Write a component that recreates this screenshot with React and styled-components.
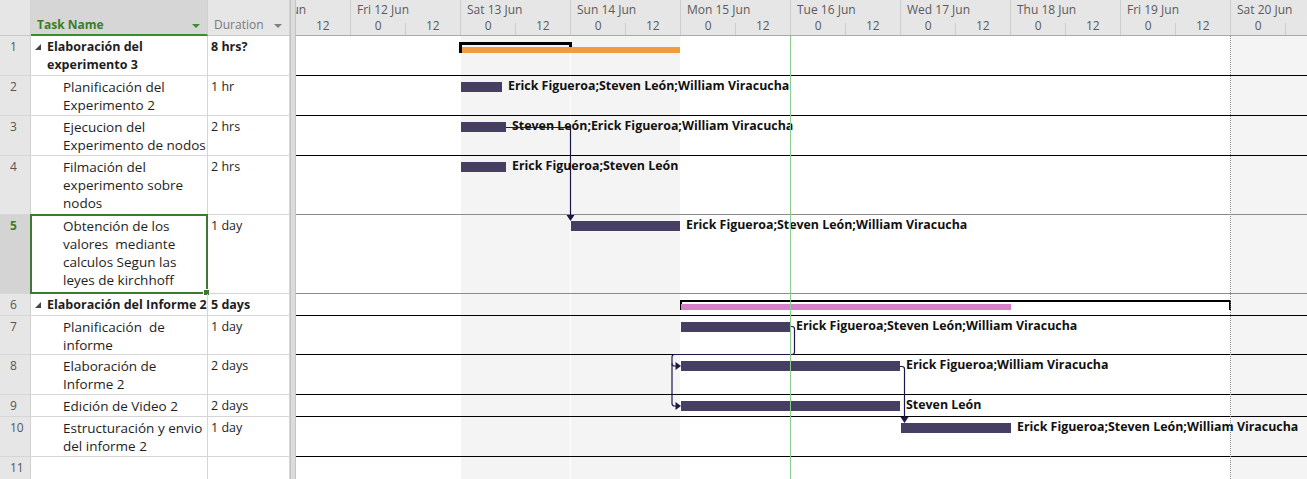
import React from "react";
import styled, { createGlobalStyle } from "styled-components";

// chart pane starts at page x 296, first visible day (Thu 11 Jun) begins at 240
const CHART_LEFT = 296;
const BODY_TOP = 36;
const DAY_W = 110;
const FIRST_DAY = 240;

const at = (x) => x - CHART_LEFT;

const DAYS = [
  "Thu 11 Jun",
  "Fri 12 Jun",
  "Sat 13 Jun",
  "Sun 14 Jun",
  "Mon 15 Jun",
  "Tue 16 Jun",
  "Wed 17 Jun",
  "Thu 18 Jun",
  "Fri 19 Jun",
  "Sat 20 Jun",
  "Sun 21 Jun",
];

const ALL = "Erick Figueroa;Steven León;William Viracucha";

const TASKS = [
  { id: 1, h: 40, lines: ["Elaboración del", "experimento 3"], dur: "8 hrs?", summary: true,
    bracket: [459, 572], sbar: [462, 680], color: "#f09b3d" },
  { id: 2, h: 40, lines: ["Planificación del", "Experimento 2"], dur: "1 hr", bar: [461, 502], label: ALL },
  { id: 3, h: 40, lines: ["Ejecucion del", "Experimento de nodos"], dur: "2 hrs", bar: [461, 506],
    label: "Steven León;Erick Figueroa;William Viracucha" },
  { id: 4, h: 59, lines: ["Filmación del", "experimento sobre", "nodos"], dur: "2 hrs", bar: [461, 506],
    label: "Erick Figueroa;Steven León", line: "#8c8c8c" },
  { id: 5, h: 79, lines: ["Obtención de los", "valores  mediante", "calculos Segun las", "leyes de kirchhoff"],
    dur: "1 day", bar: [571, 680], label: ALL, selected: true, line: "#8c8c8c" },
  { id: 6, h: 22, lines: ["Elaboración del Informe 2"], dur: "5 days", summary: true,
    bracket: [680, 1231], sbar: [681, 1011], color: "#d77fc8", thin: true },
  { id: 7, h: 39, lines: ["Planificación  de", "informe"], dur: "1 day", bar: [681, 790], label: ALL },
  { id: 8, h: 40, lines: ["Elaboración de", "Informe 2"], dur: "2 days", bar: [681, 900],
    label: "Erick Figueroa;William Viracucha" },
  { id: 9, h: 22, lines: ["Edición de Video 2"], dur: "2 days", bar: [681, 900], label: "Steven León" },
  { id: 10, h: 40, lines: ["Estructuración y envio", "del informe 2"], dur: "1 day", bar: [901, 1011], label: ALL },
  { id: 11, h: 40, lines: [], dur: "" },
];

const GlobalStyle = createGlobalStyle`
  html, body {
    margin: 0;
    padding: 0;
    background: #fff;
  }
  body {
    font-family: "Open Sans", "Noto Sans", sans-serif;
    font-size: 12.5px;
    color: #1e1e1e;
    overflow: hidden;
  }
`;

const Page = styled.div`
  display: flex;
  width: 1307px;
  height: 479px;
  overflow: hidden;
`;

/* ---------- task table ---------- */

const TablePane = styled.div`
  width: 290px;
  flex: none;
  display: flex;
  flex-direction: column;
`;

const TableHeader = styled.div`
  display: grid;
  grid-template-columns: 31px 177px 82px;
  height: 36px;
  flex: none;
`;

const Corner = styled.div`
  background: #e6e6e6;
  border-right: 1px solid #d0d0d0;
  border-bottom: 1px solid #c8c8c8;
`;

const ColHead = styled.div`
  position: relative;
  display: flex;
  align-items: flex-end;
  padding: 0 0 ${(p) => (p.$active ? 1 : 2)}px 6px;
  background: ${(p) => (p.$active ? "#d6d6d6" : "#e6e6e6")};
  border-right: 1px solid #d0d0d0;
  border-bottom: ${(p) => (p.$active ? "2px solid #3e8a35" : "1px solid #c8c8c8")};
  color: ${(p) => (p.$active ? "#3a7d2c" : "#7a7a7a")};
  font-weight: ${(p) => (p.$active ? 700 : 400)};
  font-size: 12px;
  line-height: 16px;
  &::after {
    content: "";
    position: absolute;
    right: 7px;
    bottom: ${(p) => (p.$active ? 6 : 7)}px;
    border-left: 4px solid transparent;
    border-right: 4px solid transparent;
    border-top: 4px solid ${(p) => (p.$active ? "#3e8a35" : "#808080")};
  }
`;

const TableRow = styled.div`
  display: grid;
  grid-template-columns: 31px 177px 82px;
  height: ${(p) => p.$h}px;
  flex: none;
`;

const NumCell = styled.div`
  background: ${(p) => (p.$selected ? "#d4d4d4" : "#e6e6e6")};
  color: ${(p) => (p.$selected ? "#3a7d2c" : "#555")};
  font-weight: ${(p) => (p.$selected ? 700 : 400)};
  font-size: 12px;
  border-right: 1px solid #d0d0d0;
  border-bottom: 1px solid #d6d6d6;
  padding: 2px 0 0 10px;
  line-height: 18px;
`;

const NameCell = styled.div`
  position: relative;
  display: flex;
  align-items: flex-start;
  padding: 2px 0 0 ${(p) => (p.$summary ? 4 : 32)}px;
  border-right: 1px solid #d6d6d6;
  border-bottom: 1px solid #d6d6d6;
  font-weight: ${(p) => (p.$summary ? 700 : 400)};
  font-size: ${(p) => (p.$summary ? 12.5 : 13.5)}px;
  line-height: 18px;
  white-space: pre;
  ${(p) =>
    p.$selected &&
    `
    &::before {
      content: "";
      position: absolute;
      left: -1px; top: -1px; right: -1px; bottom: -1px;
      border: 2px solid #3c7a30;
      pointer-events: none;
    }
    &::after {
      content: "";
      position: absolute;
      right: -3px; bottom: -3px;
      width: 5px; height: 5px;
      background: #3c7a30;
      border: 1px solid #fff;
    }
  `}
`;

const Collapse = styled.svg`
  flex: none;
  width: 6px;
  height: 6px;
  margin: 6px 6px 0 0;
`;

const DurCell = styled.div`
  padding: 2px 0 0 3px;
  border-right: 1px solid #d6d6d6;
  border-bottom: 1px solid #d6d6d6;
  font-weight: ${(p) => (p.$summary ? 700 : 400)};
  line-height: 18px;
`;

const Splitter = styled.div`
  width: 6px;
  flex: none;
  background: #dcdcdc;
  border-left: 1px solid #c4c4c4;
  border-right: 1px solid #c4c4c4;
  box-sizing: border-box;
`;

/* ---------- gantt chart ---------- */

const ChartPane = styled.div`
  flex: 1;
  position: relative;
  overflow: hidden;
  display: flex;
  flex-direction: column;
`;

const TimeHeader = styled.div`
  display: flex;
  height: 36px;
  flex: none;
  margin-left: ${FIRST_DAY - CHART_LEFT}px;
  background: #e6e6e6;
  border-bottom: 1px solid #a9a9a9;
  box-sizing: border-box;
  color: #5a5a5a;
  font-size: 12px;
`;

const DayCol = styled.div`
  width: ${DAY_W}px;
  flex: none;
  border-left: 1px solid #cdcdcd;
  box-sizing: border-box;
  display: flex;
  flex-direction: column;
`;

const DayLabel = styled.div`
  height: 18px;
  padding: 1px 0 0 6px;
  box-sizing: border-box;
  line-height: 17px;
  white-space: nowrap;
`;

const HalfRow = styled.div`
  display: flex;
  flex: 1;
`;

const Half = styled.div`
  position: relative;
  flex: 1;
  text-align: center;
  line-height: 16px;
  ${(p) =>
    p.$tick &&
    `
    &::before {
      content: "";
      position: absolute;
      left: -1px; top: 5px; bottom: 0;
      border-left: 1px solid #cdcdcd;
    }
  `}
`;

const ChartBody = styled.div`
  position: relative;
  flex: 1;
`;

const Shade = styled.div`
  position: absolute;
  top: 0;
  bottom: 0;
  left: ${(p) => p.$left}px;
  width: ${(p) => p.$width}px;
  background: #f4f4f4;
`;

const ChartRow = styled.div`
  position: relative;
  height: ${(p) => p.$h}px;
  border-bottom: 1px solid ${(p) => p.$line || "#000"};
  box-sizing: border-box;
`;

const Bar = styled.div`
  position: absolute;
  top: 6px;
  height: 10px;
  left: ${(p) => p.$left}px;
  width: ${(p) => p.$width}px;
  background: #463f63;
`;

const BarLabel = styled.div`
  position: absolute;
  top: 1px;
  left: ${(p) => p.$left}px;
  font-weight: 700;
  font-size: 12.4px;
  line-height: 18px;
  color: #111;
  white-space: nowrap;
`;

const Bracket = styled.div`
  position: absolute;
  top: 6px;
  height: ${(p) => (p.$thin ? 10 : 11)}px;
  left: ${(p) => p.$left}px;
  width: ${(p) => p.$width}px;
  box-sizing: border-box;
  border: ${(p) => (p.$thin ? 2 : 3)}px solid #000;
  border-bottom: none;
`;

const SummaryBar = styled.div`
  position: absolute;
  top: ${(p) => (p.$thin ? 10 : 11)}px;
  height: 6px;
  left: ${(p) => p.$left}px;
  width: ${(p) => p.$width}px;
  background: ${(p) => p.$color};
`;

const TodayLine = styled.div`
  position: absolute;
  top: 0;
  bottom: 0;
  left: ${at(790)}px;
  width: 1px;
  background: #8ccc8c;
  z-index: 3;
`;

const FinishLine = styled.div`
  position: absolute;
  top: 0;
  bottom: 0;
  left: ${at(1230)}px;
  border-left: 1px dotted #8a8a8a;
  z-index: 3;
`;

const LinkLayer = styled.svg`
  position: absolute;
  left: 0;
  top: 0;
  width: 100%;
  height: 100%;
  z-index: 2;
  overflow: visible;
  pointer-events: none;
`;

const TimeScale = () => (
  <TimeHeader>
    {DAYS.map((d) => (
      <DayCol key={d}>
        <DayLabel>{d}</DayLabel>
        <HalfRow>
          <Half>0</Half>
          <Half $tick>12</Half>
        </HalfRow>
      </DayCol>
    ))}
  </TimeHeader>
);

const Links = () => (
  <LinkLayer>
    <g transform={`translate(${-CHART_LEFT} ${-BODY_TOP})`} stroke="#1d1749" strokeWidth="1.2" fill="none">
      <path d="M506 127.5 H570.5 V216" />
      <path d="M790 326.5 H792 Q794.5 326.5 794.5 329 V352 Q794.5 354.5 792 354.5 H674.5 Q672 354.5 672 357 V403.5 Q672 406 674.5 406 H677" />
      <path d="M672 363.5 Q672 366 674.5 366 H677" />
      <path d="M900 366.5 H902 Q904.5 366.5 904.5 369 V418" />
    </g>
    <g transform={`translate(${-CHART_LEFT} ${-BODY_TOP})`} fill="#1d1749">
      <polygon points="566.5,215 574.5,215 570.5,221" />
      <polygon points="675.5,362 675.5,370 681,366" />
      <polygon points="675.5,402 675.5,410 681,406" />
      <polygon points="900.5,417 908.5,417 904.5,423" />
    </g>
  </LinkLayer>
);

export default function App() {
  return (
    <>
      <GlobalStyle />
      <Page>
        <TablePane>
          <TableHeader>
            <Corner />
            <ColHead $active>Task Name</ColHead>
            <ColHead>Duration</ColHead>
          </TableHeader>
          {TASKS.map((t) => (
            <TableRow key={t.id} $h={t.h}>
              <NumCell $selected={t.selected}>{t.id}</NumCell>
              <NameCell $summary={t.summary} $selected={t.selected}>
                {t.summary && (
                  <Collapse viewBox="0 0 6 6">
                    <polygon points="6,0 6,6 0,6" fill="#444" />
                  </Collapse>
                )}
                <div>
                  {t.lines.map((l, i) => (
                    <div key={i}>{l}</div>
                  ))}
                </div>
              </NameCell>
              <DurCell $summary={t.summary}>{t.dur}</DurCell>
            </TableRow>
          ))}
        </TablePane>
        <Splitter />
        <ChartPane>
          <TimeScale />
          <ChartBody>
            <Shade $left={at(461)} $width={109} />
            <Shade $left={at(571)} $width={109} />
            <Shade $left={at(1231)} $width={110} />
            {TASKS.map((t) => (
              <ChartRow key={t.id} $h={t.h} $line={t.line}>
                {t.bracket && (
                  <>
                    <Bracket $thin={t.thin} $left={at(t.bracket[0])} $width={t.bracket[1] - t.bracket[0]} />
                    <SummaryBar $thin={t.thin} $color={t.color} $left={at(t.sbar[0])} $width={t.sbar[1] - t.sbar[0]} />
                  </>
                )}
                {t.bar && (
                  <>
                    <Bar $left={at(t.bar[0])} $width={t.bar[1] - t.bar[0]} />
                    <BarLabel $left={at(t.bar[1]) + 6}>{t.label}</BarLabel>
                  </>
                )}
              </ChartRow>
            ))}
            <Links />
            <TodayLine />
            <FinishLine />
          </ChartBody>
        </ChartPane>
      </Page>
    </>
  );
}
